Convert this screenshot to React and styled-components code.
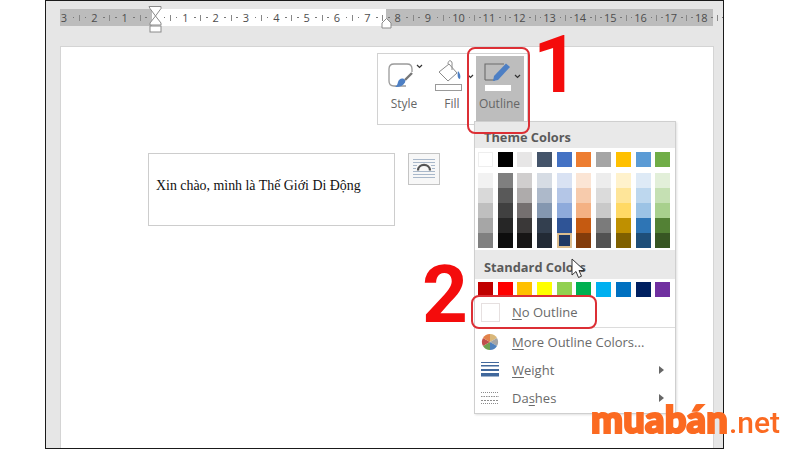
import React from "react";
import styled, { createGlobalStyle } from "styled-components";

const Global = createGlobalStyle`
  html, body { margin: 0; padding: 0; background: #fff; }
  body { width: 800px; height: 450px; overflow: hidden; font-family: "Open Sans", "Liberation Sans", sans-serif; }
  #root { width: 800px; height: 450px; position: relative; overflow: hidden; filter: blur(0.35px); }
`;

const Shell = styled.div`
  box-sizing: border-box;
  margin-left: 45px;
  width: 679px;
  height: 449px;
  border: 1px solid #1a1a1a;
  background: #e6e6e6;
  padding: 8px 9px 0 14px;
  display: flex;
  flex-direction: column;
`;

const RulerBar = styled.div`
  position: relative;
  width: 653px;
  height: 17px;
  flex: none;
  display: flex;
  align-items: center;
  background: linear-gradient(to right, #bcbcbc 0 92px, #fff 92px 326px, #bcbcbc 326px);
`;

const Segment = styled.div`
  flex: none;
  width: 30.33px;
  box-sizing: border-box;
  display: flex;
  align-items: center;
  justify-content: space-between;
  padding: 0 4px 0 0;
  font-size: 11px;
  line-height: 17px;
  color: #4d4d4d;
`;

const RulerNumber = styled.span`
  min-width: 8px;
  text-align: ${(p) => (p.$wide ? "left" : "center")};
  margin-left: ${(p) => (p.$wide ? "-2px" : "0")};
`;
const RulerDot = styled.i`
  width: 1.5px;
  height: 1.5px;
  background: #777;
`;
const RulerTick = styled.i`
  width: 1px;
  height: 6px;
  background: #888;
`;

const RulerMarks = styled.svg`
  position: absolute;
  left: ${(p) => p.$x}px;
  top: -3px;
`;

const Page = styled.div`
  position: relative;
  box-sizing: border-box;
  margin-top: 20px;
  width: 654px;
  flex: 1;
  background: #fff;
  border: 1px solid #d4d4d4;
  border-bottom: none;
  padding: 106px 0 0 87px;
  display: flex;
  align-items: flex-start;
  gap: 13px;
`;

const TextBox = styled.div`
  box-sizing: border-box;
  width: 247px;
  height: 73px;
  border: 1.5px solid #cdcdcd;
  padding: 22px 0 0 7px;
  font: 13.9px/20px "Liberation Serif", serif;
  color: #111;
  white-space: nowrap;
`;

const LayoutButton = styled.div`
  box-sizing: border-box;
  width: 32px;
  height: 32px;
  border: 1px solid #c4c4c4;
  background: #f7f7f7;
  display: flex;
  align-items: center;
  justify-content: center;
`;

const MiniToolbar = styled.div`
  position: absolute;
  left: 316px;
  top: 6px;
  box-sizing: border-box;
  width: 151px;
  height: 72px;
  background: #fff;
  border: 1px solid #d2d2d2;
  display: grid;
  grid-template-columns: 49px 47px 48px;
  padding: 2px 3px 2px 2px;
`;

const ToolButton = styled.div`
  display: flex;
  flex-direction: column;
  align-items: center;
  background: ${(p) => (p.$active ? "#bdbdbd" : "transparent")};
  font-size: 12px;
  color: #666;
  padding-top: 4px;
  box-sizing: border-box;
  height: 66px;
  svg { flex: none; }
  span { margin-top: 4px; line-height: 16px; margin-right: 1px; }
`;

const Menu = styled.div`
  position: absolute;
  left: 413px;
  top: 74px;
  width: 202px;
  height: 293px;
  box-sizing: border-box;
  background: #fff;
  border: 1px solid #cfcfcf;
  box-shadow: 1px 1px 2px rgba(0, 0, 0, 0.12);
  display: flex;
  flex-direction: column;
`;

const MenuHeader = styled.div`
  height: ${(p) => p.$h}px;
  flex: none;
  box-sizing: border-box;
  background: #e9e9e9;
  font-size: 12.8px;
  font-weight: 700;
  color: #5a5a5a;
  padding: ${(p) => p.$pt}px 0 0 9px;
  margin-top: ${(p) => p.$mt || 0}px;
  line-height: 18px;
`;

const SwatchRow = styled.div`
  display: flex;
  gap: 4.7px;
  padding: ${(p) => p.$pad};
  flex: none;
`;

const Swatch = styled.div`
  flex: none;
  width: 15px;
  height: 15px;
  background: ${(p) => p.$c};
  border: ${(p) => (p.$white ? "1px solid #eee" : "none")};
  box-sizing: border-box;
`;

const TintColumn = styled.div`
  flex: none;
  display: flex;
  flex-direction: column;
  width: 15px;
`;

const Tint = styled.div`
  height: 15px;
  box-sizing: border-box;
  background: ${(p) => p.$c};
  border: ${(p) => (p.$selected ? "2px solid #dcbd8e" : "none")};
`;

const MenuItem = styled.div`
  flex: none;
  height: ${(p) => p.$h || 28}px;
  display: flex;
  align-items: center;
  box-sizing: border-box;
  padding-left: 5px;
  font-size: 13px;
  color: #6a6a6a;
  border-bottom: ${(p) => (p.$divider ? "1px solid #dcdcdc" : "none")};
  position: relative;
  u { text-underline-offset: 2px; }
`;

const ItemIcon = styled.div`
  width: 20px;
  height: 20px;
  margin-right: 12px;
  flex: none;
  display: flex;
  align-items: center;
  justify-content: center;
`;

const EmptySquare = styled.div`
  width: 19px;
  height: 19px;
  box-sizing: border-box;
  border: 1px solid #e6e0e0;
  background: #fff;
`;

const Arrow = styled.i`
  position: absolute;
  right: 11px;
  top: 50%;
  margin-top: -4px;
  border-left: 5px solid #666;
  border-top: 4px solid transparent;
  border-bottom: 4px solid transparent;
`;

const RedFrame = styled.div`
  position: absolute;
  left: ${(p) => p.$x}px;
  top: ${(p) => p.$y}px;
  width: ${(p) => p.$w}px;
  height: ${(p) => p.$h}px;
  box-sizing: border-box;
  border: 2px solid #dc2f35;
  border-radius: 8px;
`;

const BigNumber = styled.div`
  position: absolute;
  left: ${(p) => p.$x}px;
  top: ${(p) => p.$y}px;
  font: 700 80px/60px "Roboto", sans-serif;
  color: #f40c0c;
`;

const Cursor = styled.svg`
  position: absolute;
  left: 571px;
  top: 258px;
`;

const Logo = styled.div`
  position: absolute;
  left: 591px;
  top: 396px;
  display: flex;
  align-items: baseline;
  color: #fb6a21;
  white-space: nowrap;
  line-height: 44px;
`;

const LogoName = styled.span`
  font: 900 38px/44px "Lato", "Open Sans", sans-serif;
  -webkit-text-stroke: 2.2px #fb6a21;
  letter-spacing: 0.2px;
`;

const LogoTld = styled.span`
  font: 500 30px/44px "Roboto", sans-serif;
  margin-left: 1px;
`;

const themeTop = ["#ffffff", "#000000", "#e7e6e6", "#44546a", "#4472c4", "#ed7d31", "#a5a5a5", "#ffc000", "#5b9bd5", "#70ad47"];
const tints = [
  ["#f2f2f2", "#d9d9d9", "#bfbfbf", "#a6a6a6", "#808080"],
  ["#7f7f7f", "#595959", "#404040", "#262626", "#0d0d0d"],
  ["#d0cece", "#aeabab", "#757070", "#3a3838", "#171616"],
  ["#d6dce4", "#adb9ca", "#8497b0", "#333f4f", "#222a35"],
  ["#d9e2f3", "#b4c6e7", "#8eaadb", "#2f5496", "#1f3864"],
  ["#fbe5d5", "#f7cbac", "#f4b183", "#c55a11", "#833c0b"],
  ["#ededed", "#dbdbdb", "#c9c9c9", "#7b7b7b", "#525252"],
  ["#fff2cc", "#fee599", "#ffd965", "#bf9000", "#7f6000"],
  ["#deeaf6", "#bdd7ee", "#9cc3e5", "#2e75b5", "#1e4e79"],
  ["#e2efd9", "#c5e0b3", "#a8d08d", "#538135", "#375623"],
];
const standard = ["#c00000", "#ff0000", "#ffc000", "#ffff00", "#92d050", "#00b050", "#00b0f0", "#0070c0", "#002060", "#7030a0"];
const ruler = [3, 2, 1, "", 1, 2, 3, 4, 5, 6, 7, 8, 9, 10, 11, 12, 13, 14, 15, 16, 17, 18];

const Chevron = ({ x, y }) => (
  <path d={`M${x} ${y}l2.5 2.5 2.5-2.5`} fill="none" stroke="#333" strokeWidth="1.2" />
);

export default function App() {
  return (
    <>
      <Global />
      <Shell>
        <RulerBar>
          {ruler.map((n, i) => (
            <Segment key={i}>
              <RulerNumber $wide={n >= 10}>{n}</RulerNumber>
              <RulerDot />
              <RulerTick />
              <RulerDot />
            </Segment>
          ))}
          <RulerMarks $x={85} width="20" height="30" viewBox="0 0 20 30">
            <path d="M1 .5h12v2L7.500 10 2 2.500z" transform="translate(3 0)" fill="#fff" stroke="#8a8a8a" />
            <path d="M10.500 10L16 17v2H5v-2z" fill="#fff" stroke="#8a8a8a" />
            <rect x="5" y="20" width="11" height="6" fill="#fff" stroke="#8a8a8a" />
          </RulerMarks>
          <RulerMarks $x={321} width="12" height="24" viewBox="0 0 12 24">
            <path d="M1 22v-5l4.500-4.500L10 17v5z" fill="#fff" stroke="#8a8a8a" />
          </RulerMarks>
        </RulerBar>
        <Page>
          <TextBox>Xin chào, mình là Thế Giới Di Động</TextBox>
          <LayoutButton>
            <svg width="24" height="24" viewBox="0 0 24 24">
              <g stroke="#a9b8ca" strokeWidth="1">
                <path d="M1 2.500h22M1 5.500h22M1 8.500h4M19 8.500h4M1 11.500h3M20 11.500h3M1 14.500h22M1 17.500h22M1 20.500h22" />
              </g>
              <path d="M6 13.500c0-7.500 12-7.500 12 0" fill="none" stroke="#555" strokeWidth="2.200" />
            </svg>
          </LayoutButton>

          <MiniToolbar>
            <ToolButton>
              <svg width="42" height="32" viewBox="0 0 42 32">
                <path d="M22 26H10c-3 0-5-2-5-5V9c0-3 2-5 5-5h13c3 0 5 2 5 5v3" fill="#fff" stroke="#9a9a9a" strokeWidth="1.300" />
                <path d="M28 13l-7 7" stroke="#777" strokeWidth="2.400" />
                <path d="M18 18.500c2.500 0 4 2 3 4-2 3.500-6 5-10 4.500 2.500-1.500 2.500-3.500 3-5 .7-2 2.300-3.500 4-3.500z" fill="#4d7fc4" />
                <Chevron x={33} y={5} />
              </svg>
              <span>Style</span>
            </ToolButton>
            <ToolButton>
              <svg width="42" height="32" viewBox="0 0 42 32">
                <path d="M7 12L17 4l8 9-9 8z" fill="#fff" stroke="#8a8a8a" />
                <path d="M16 4c0-5 5-4 4 1v5" fill="none" stroke="#8a8a8a" />
                <path d="M26 11c2 2 3 5 2 8-2 0-3-3-2-8z" fill="#4d7fc4" />
                <rect x="3.500" y="24.500" width="26" height="6" fill="#fff" stroke="#9a9a9a" />
                <Chevron x={36} y={15} />
              </svg>
              <span>Fill</span>
            </ToolButton>
            <ToolButton $active>
              <svg width="42" height="32" viewBox="0 0 42 32">
                <path d="M6 20V4h19" fill="none" stroke="#6c6c6c" strokeWidth="1.100" />
                <path d="M6 20h10" stroke="#6c6c6c" strokeWidth="1.100" />
                <path d="M14 21l1-5L27 3.500l4 3.500L19 20z" fill="#4d7fc4" />
                <rect x="6" y="25" width="26" height="6" fill="#fff" />
                <Chevron x={36} y={15} />
              </svg>
              <span>Outline</span>
            </ToolButton>
          </MiniToolbar>

          <Menu>
            <MenuHeader $h={26} $pt={6}>Theme Colors</MenuHeader>
            <SwatchRow $pad="4px 0 0 3px">
              {themeTop.map((c, i) => (
                <Swatch key={i} $c={c} $white={i === 0} />
              ))}
            </SwatchRow>
            <SwatchRow $pad="6px 0 0 3px">
              {tints.map((col, i) => (
                <TintColumn key={i}>
                  {col.map((c, j) => (
                    <Tint key={j} $c={c} $selected={i === 4 && j === 4} />
                  ))}
                </TintColumn>
              ))}
            </SwatchRow>
            <MenuHeader $h={29} $pt={8} $mt={2}>Standard Colors</MenuHeader>
            <SwatchRow $pad="3px 0 0 3px">
              {standard.map((c, i) => (
                <Swatch key={i} $c={c} />
              ))}
            </SwatchRow>
            <MenuItem $h={31} $divider>
              <ItemIcon><EmptySquare /></ItemIcon>
              <span><u>N</u>o Outline</span>
            </MenuItem>
            <MenuItem>
              <ItemIcon>
                <svg width="18" height="18" viewBox="0 0 18 18">
                  <path d="M9 9V1a8 8 0 0 1 7 4z" fill="#d9b77a" />
                  <path d="M9 9l7-4a8 8 0 0 1 0 8z" fill="#a5a5a5" />
                  <path d="M9 9l7 4a8 8 0 0 1-7 4z" fill="#4f81bd" />
                  <path d="M9 9v8a8 8 0 0 1-7-4z" fill="#6fa353" />
                  <path d="M9 9l-7 4a8 8 0 0 1 0-8z" fill="#c0504d" />
                  <path d="M9 9L2 5a8 8 0 0 1 7-4z" fill="#e2824a" />
                </svg>
              </ItemIcon>
              <span><u>M</u>ore Outline Colors...</span>
            </MenuItem>
            <MenuItem>
              <ItemIcon>
                <svg width="18" height="16" viewBox="0 0 18 16">
                  <g fill="#41689c">
                    <rect y="0" width="18" height="1" />
                    <rect y="3" width="18" height="1.500" />
                    <rect y="7" width="18" height="2" />
                    <rect y="11" width="18" height="3.500" />
                  </g>
                </svg>
              </ItemIcon>
              <span><u>W</u>eight</span>
              <Arrow />
            </MenuItem>
            <MenuItem>
              <ItemIcon>
                <svg width="18" height="14" viewBox="0 0 18 14">
                  <g stroke="#8c8c8c" strokeWidth="1">
                    <path d="M0 1.500h18" strokeDasharray="1 1" />
                    <path d="M0 5.500h18" strokeDasharray="1.500 1" />
                    <path d="M0 9.500h18" strokeDasharray="2 1" />
                    <path d="M0 12.500h18" strokeDasharray="1 1" />
                  </g>
                </svg>
              </ItemIcon>
              <span>Da<u>s</u>hes</span>
              <Arrow />
            </MenuItem>
          </Menu>
        </Page>
      </Shell>

      <RedFrame $x={467} $y={47} $w={63} $h={87} />
      <RedFrame $x={471} $y={295} $w={126} $h={34} />
      <BigNumber $x={533} $y={35}>1</BigNumber>
      <BigNumber $x={422} $y={265}>2</BigNumber>
      <Cursor width="16" height="24" viewBox="0 0 16 24">
        <path d="M1 1v16l4-3.500 2.500 6 3-1.300-2.500-5.700h5.500z" fill="#fff" stroke="#333" strokeWidth="1" />
      </Cursor>
      <Logo>
        <LogoName>muabán</LogoName>
        <LogoTld>.net</LogoTld>
      </Logo>
    </>
  );
}
